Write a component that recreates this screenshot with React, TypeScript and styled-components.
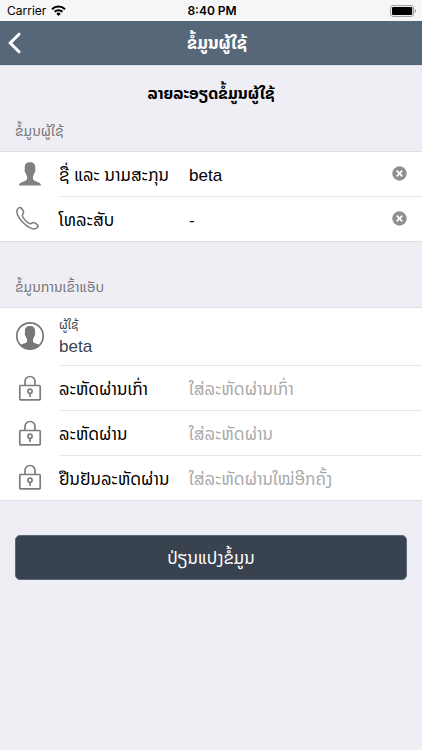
import React from "react";
import styled, { createGlobalStyle } from "styled-components";

const GlobalStyle = createGlobalStyle`
  *, *::before, *::after { box-sizing: border-box; }
  body {
    margin: 0;
    background: #efeef5;
    color: #000;
    font-family: "Liberation Sans", "Noto Sans Lao", "DejaVu Sans", sans-serif;
    font-size: 17px;
  }
  button, input { font: inherit; color: inherit; }
`;

const Page = styled.div`
  min-height: 100vh;
  background: #efeef5;
`;

const StatusBar = styled.div`
  display: grid;
  grid-template-columns: 1fr auto 1fr;
  align-items: center;
  height: 21px;
  padding: 0 5px 0 7px;
  background: #f6f6f8;
  font-family: Inter, sans-serif;
  font-size: 12px;
  line-height: 21px;
`;

const Carrier = styled.span`
  display: flex;
  align-items: center;
  gap: 5px;
`;

const Clock = styled.time`
  font-weight: 600;
`;

const BatteryIcon = styled.svg`
  justify-self: end;
`;

const NavBar = styled.header`
  display: grid;
  grid-template-columns: 44px 1fr 44px;
  align-items: center;
  height: 45px;
  background: #566779;
  border-bottom: 1px solid #dbe0ea;
  color: #fff;
`;

const BackButton = styled.button`
  display: flex;
  align-items: center;
  height: 44px;
  padding: 0 7px;
  border: 0;
  background: none;
`;

const NavTitle = styled.h1`
  margin: 0;
  padding-top: 2px;
  padding-left: 12px;
  font-size: 17px;
  line-height: 42px;
  font-weight: 700;
  text-align: center;
  white-space: nowrap;
`;

const FormTitle = styled.h2`
  margin: 0;
  padding-top: 12px;
  font-size: 16px;
  line-height: 32px;
  font-weight: 700;
  text-align: center;
`;

const SectionTitle = styled.h3<{ $spaced?: boolean }>`
  margin: 0;
  padding: ${(p) => (p.$spaced ? "29px" : "5px")} 15px 4px;
  color: #777;
  font-size: 14px;
  line-height: 32px;
  font-weight: 400;
`;

const Group = styled.div`
  border-top: 1px solid #dddde2;
  border-bottom: 1px solid #dddde2;
  background: #fff;
`;

const Row = styled.div`
  display: flex;
  align-items: stretch;
`;

const IconCell = styled.div`
  display: flex;
  align-items: center;
  justify-content: center;
  flex: 0 0 59px;
  padding-bottom: 2px;
`;

const RowBody = styled.div`
  display: flex;
  align-items: center;
  flex: 1;
  min-width: 0;
  min-height: 45px;
  padding-right: 15px;
  border-bottom: 1px solid #e6e6ea;

  ${Row}:last-child > & { border-bottom: 0; min-height: 44px; }
`;

const Label = styled.label`
  flex: 0 0 130px;
  padding-top: 4px;
  font-size: 17px;
  line-height: 24px;
  white-space: nowrap;
`;

const TextInput = styled.input`
  flex: 1;
  min-width: 0;
  height: 34px;
  padding: 4px 0 0;
  border: 0;
  outline: 0;
  background: none;
  font-size: 17px;

  &::placeholder { color: #a9a9a9; opacity: 1; }
`;

const ClearButton = styled.button`
  display: flex;
  padding: 0 0 2px;
  border: 0;
  background: none;
`;

const StackedBody = styled(RowBody)`
  flex-direction: column;
  align-items: flex-start;
  justify-content: center;
  min-height: 58px;
  color: #39434f;
`;

const StackedLabel = styled.span`
  font-size: 12px;
  line-height: 20px;
`;

const StackedValue = styled.span`
  font-size: 17px;
  line-height: 24px;
`;

const SubmitButton = styled.button`
  display: block;
  width: calc(100% - 30px);
  height: 45px;
  margin: 34px 15px 0;
  border: 1px solid #5b6b7c;
  border-radius: 5px;
  background: #39434f;
  color: #fff;
  font-size: 17px;
`;

const PersonIcon = () => (
  <svg width="30" height="30" viewBox="0 0 30 30" aria-hidden="true">
    <path
      d="M15 3.300c-3.600 0-5.300 2-5.300 5.100 0 .8 0 1.500.2 2.100-.7.400-.4 2.600.6 3.200.3 1.300.8 2.400 1.500 3.200v3.200c-.6 1.700-2.300 2.100-4.300 2.800-2.400.8-3.700 1.600-3.700 3.500h22c0-1.900-1.300-2.700-3.700-3.500-2-.7-3.700-1.100-4.300-2.800v-3.200c.7-.8 1.200-1.900 1.500-3.200 1-.6 1.300-2.800.6-3.200.2-.6.2-1.300.2-2.100 0-3.100-1.700-5.100-5.300-5.100z"
      fill="#808080"
    />
  </svg>
);

const PhoneIcon = () => (
  <svg width="30" height="30" viewBox="0 0 30 30" aria-hidden="true">
    <path
      d="M3.300 5.300C4.300 4.300 5.300 4.200 6 4.900c1.200 1.200 2.300 3 2.600 4.300.3 1.600-1.600 2-1.300 3.500.6 2.700 4.600 7 7.500 8 1.700.6 2.100-1.500 3.700-1.200 1.500.3 3.300 1.600 4.200 2.800.7 1-.1 2.100-1.200 2.900-1.400.9-3.500.8-5.200.2C10.500 23.400 2.700 15.200 1.900 9.200c-.2-1.500.3-2.900 1.400-3.900z"
      fill="none"
      stroke="#7d7d7d"
      strokeWidth="1.500"
      strokeLinejoin="round"
    />
  </svg>
);

const ContactIcon = () => (
  <svg width="30" height="30" viewBox="0 0 30 30" aria-hidden="true">
    <circle cx="15" cy="15" r="13.200" fill="none" stroke="#777" strokeWidth="1.700" />
    <path
      d="M15 5c-3.500 0-5.100 2-5.100 5 0 .8 0 1.500.2 2.100-.7.400-.4 2.500.6 3.100.2 1.200.7 2.200 1.300 2.900v2.700c-.5 1.700-4.400 1.700-6.500 3.200A13.200 13.200 0 0 0 15 28.200a13.200 13.200 0 0 0 9.500-4.200c-2.100-1.500-6-1.500-6.500-3.200v-2.700c.6-.7 1.100-1.700 1.300-2.900 1-.6 1.300-2.700.6-3.100.2-.6.2-1.300.2-2.100 0-3-1.600-5-5.100-5z"
      fill="#777"
    />
  </svg>
);

const LockIcon = () => (
  <svg width="30" height="30" viewBox="0 0 30 30" aria-hidden="true">
    <g fill="none" stroke="#7d7d7d" strokeWidth="1.700">
      <rect x="4.800" y="12.500" width="20.400" height="14.400" rx=".8" />
      <path d="M10 12.500V8.500a5 5 0 0 1 10 0v4" />
      <circle cx="15" cy="18.300" r="2.100" />
      <path d="M15 20.300v3.700" />
    </g>
  </svg>
);

const ClearIcon = () => (
  <svg width="15" height="15" viewBox="0 0 15 15" aria-hidden="true">
    <circle cx="7.500" cy="7.500" r="7.200" fill="#8e8e93" />
    <path d="M4.700 4.700l5.600 5.600M10.300 4.700l-5.600 5.600" stroke="#fff" strokeWidth="1.700" />
  </svg>
);

type FieldProps = {
  id: string;
  label: string;
  icon: React.ReactNode;
  value?: string;
  placeholder?: string;
  type?: string;
  clearable?: boolean;
};

function Field({ id, label, icon, value = "", placeholder, type = "text", clearable }: FieldProps) {
  const [text, setText] = React.useState(value);
  return (
    <Row>
      <IconCell>{icon}</IconCell>
      <RowBody>
        <Label htmlFor={id}>{label}</Label>
        <TextInput
          id={id}
          type={type}
          value={text}
          placeholder={placeholder}
          onChange={(e) => setText(e.target.value)}
        />
        {clearable && (
          <ClearButton type="button" aria-label="ລຶບ" onClick={() => setText("")}>
            <ClearIcon />
          </ClearButton>
        )}
      </RowBody>
    </Row>
  );
}

export default function App() {
  return (
    <Page>
      <GlobalStyle />
      <StatusBar>
        <Carrier>
          Carrier
          <svg width="15" height="11" viewBox="0 0 15 11" aria-hidden="true">
            <g fill="none" stroke="#000" strokeWidth="2">
              <path d="M1 4.300a9.200 9.200 0 0 1 13 0" />
              <path d="M3.500 6.800a5.700 5.700 0 0 1 8 0" />
            </g>
            <path d="M7.500 11L5.300 8.700a3.100 3.100 0 0 1 4.400 0z" />
          </svg>
        </Carrier>
        <Clock>8:40 PM</Clock>
        <BatteryIcon width="27" height="12" viewBox="0 0 27 12" aria-hidden="true">
          <rect x=".6" y=".6" width="23" height="10.800" rx="2.500" fill="none" stroke="#999" />
          <rect x="2" y="2" width="20.200" height="8" rx="1.200" />
          <path d="M24.800 4v4c1.700-.7 1.700-3.300 0-4z" fill="#999" />
        </BatteryIcon>
      </StatusBar>
      <NavBar>
        <BackButton type="button" aria-label="ກັບຄືນ">
          <svg width="15" height="24" viewBox="0 0 15 24" aria-hidden="true">
            <path
              d="M12 3.200L3.200 12l8.800 8.800"
              fill="none"
              stroke="#fff"
              strokeWidth="3"
              strokeLinecap="round"
            />
          </svg>
        </BackButton>
        <NavTitle>ຂໍ້ມູນຜູ້ໃຊ້</NavTitle>
      </NavBar>
      <form onSubmit={(e) => e.preventDefault()}>
        <FormTitle>ລາຍລະອຽດຂໍ້ມູນຜູ້ໃຊ້</FormTitle>
        <SectionTitle>ຂໍ້ມູນຜູ້ໃຊ້</SectionTitle>
        <Group>
          <Field id="name" label="ຊື່ ແລະ ນາມສະກຸນ" icon={<PersonIcon />} value="beta" clearable />
          <Field id="phone" label="ໂທລະສັບ" icon={<PhoneIcon />} value="-" clearable />
        </Group>
        <SectionTitle $spaced>ຂໍ້ມູນການເຂົ້າແອັບ</SectionTitle>
        <Group>
          <Row>
            <IconCell>
              <ContactIcon />
            </IconCell>
            <StackedBody>
              <StackedLabel>ຜູ້ໃຊ້</StackedLabel>
              <StackedValue>beta</StackedValue>
            </StackedBody>
          </Row>
          <Field
            id="old-password"
            type="password"
            label="ລະຫັດຜ່ານເກົ່າ"
            placeholder="ໃສ່ລະຫັດຜ່ານເກົ່າ"
            icon={<LockIcon />}
          />
          <Field
            id="password"
            type="password"
            label="ລະຫັດຜ່ານ"
            placeholder="ໃສ່ລະຫັດຜ່ານ"
            icon={<LockIcon />}
          />
          <Field
            id="confirm-password"
            type="password"
            label="ຢືນຢັນລະຫັດຜ່ານ"
            placeholder="ໃສ່ລະຫັດຜ່ານໃໝ່ອີກຄັ້ງ"
            icon={<LockIcon />}
          />
        </Group>
        <SubmitButton type="submit">ປ່ຽນແປງຂໍ້ມູນ</SubmitButton>
      </form>
    </Page>
  );
}
